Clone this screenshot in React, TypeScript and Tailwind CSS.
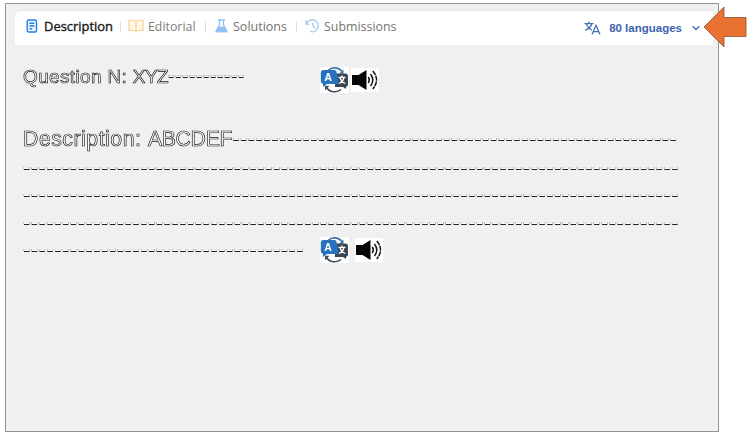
import React from 'react';

const outline =
  "will-change-transform [-webkit-text-stroke:0.65px_#101010] text-white whitespace-nowrap font-['Liberation_Sans',Arial,sans-serif]";

const dashEdge =
  '[-webkit-text-stroke:0.6px_#757575] [paint-order:stroke_fill] [text-shadow:0_0.7px_0_#202020] leading-none align-[1px]';

function Dashes({ count, className }: { count: number; className: string }) {
  return <span className={`${dashEdge} ${className}`}>{'-'.repeat(count)}</span>;
}

function TranslateBadge() {
  return (
    <svg className="block h-[26px] w-[29px] shrink-0 bg-white" viewBox="0 0 29 26">
      <path d="M8 3.5C12-.5 19 0 22.3 5" fill="none" stroke="#3d77ac" strokeWidth="1.6" />
      <path d="M23.5 2.5v4.3h-4.5z" fill="#3d77ac" />
      <path d="M21 22.5C17 26 9.500 25.500 6.500 20.500" fill="none" stroke="#3f4c5b" strokeWidth="1.6" />
      <path d="M5 23.200v-4.500h4.500z" fill="#3f4c5b" />
      <path d="M15 6.500h10.500a2.500 2.500 0 0 1 2.500 2.500v8.500a2.500 2.500 0 0 1-2 2.400V22l-3-2h-8z" fill="#3b4653" />
      <path d="M3 3h11.500a2 2 0 0 1 1.900 1.500L19 17H7l-4 3v-3.200A2.500 2.500 0 0 1 .8 14.500v-9A2.500 2.500 0 0 1 3 3z" fill="#2872bd" />
      <text x="4.300" y="14" className="[-webkit-text-stroke:0px]" fill="#fff" fontSize="10.500" fontWeight="700" fontFamily="Liberation Sans, sans-serif">A</text>
      <path d="M18.500 10.300h7M22 8.500v1.800M24 10.500c-.7 2.800-2.700 5-5 6M20 10.500c.8 2.800 2.800 5 5.200 6" fill="none" stroke="#fff" strokeWidth="1.300" />
    </svg>
  );
}

function Speaker() {
  return (
    <svg className="block h-[24px] w-[28px] shrink-0 bg-white" viewBox="0 0 28 24">
      <path d="M1 7h6.500L15.500 2v20l-8-5H1z" fill="#050505" />
      <g fill="none" stroke="#151515" strokeWidth="1.500">
        <path d="M17.300 9q2 3 0 6" />
        <path d="M19.500 6q4.600 6 0 12" />
        <path d="M21.800 3q7.500 9 0 18" strokeDasharray="5 .7" />
      </g>
    </svg>
  );
}

function Divider() {
  return <span className="h-[11px] w-px shrink-0 bg-[#dedede]" />;
}

export default function App() {
  return (
    <div className="relative h-[438px] w-[752px] overflow-hidden bg-white pl-[5px] pt-[3px]">
      <div className="h-[429px] w-[714px] border border-[#929496] bg-[#f0f0f0] pl-[9px] pt-[6px]">
        <header className="flex h-[35px] w-[698px] items-center rounded-tl-[5px] border-t border-[#e5e5e5] bg-white pb-[4px] font-['Open_Sans',sans-serif] text-[13px] text-[#777773]">
          <div className="flex w-[105px] items-center pl-[11px]">
            <svg className="h-[14px] w-[12px] shrink-0" viewBox="0 0 12 14" fill="none" stroke="#277ee5" strokeWidth="1.400">
              <rect x="1.200" y="1" width="9.300" height="12" rx="1.500" fill="#e9f4ff" />
              <path d="M3.500 4.300h4.800M3.500 7h4.800M3.500 9.700h2.700" />
            </svg>
            <svg className="ml-[5px] h-[20px] w-[71px] overflow-visible" viewBox="0 0 71 20">
              <text x="1" y="15" textLength="69" lengthAdjust="spacingAndGlyphs" fill="#161616" fontSize="13" fontWeight="500" stroke="#161616" strokeWidth=".35">Description</text>
            </svg>
          </div>
          <Divider />
          <div className="flex w-[84px] items-center pl-[7px]">
            <svg className="h-[14px] w-[16px] shrink-0" viewBox="0 0 16 14" fill="#fff8e8" stroke="#f8d69c" strokeWidth="1.300">
              <path d="M8 2.500Q7.500 1.300 5.500 1.300H1v10h4.500Q7.500 11.300 8 12.500q.5-1.200 2.500-1.200H15v-10h-4.500Q8.500 1.300 8 2.500zv10" />
            </svg>
            <svg className="ml-[4px] h-[20px] w-[50px] overflow-visible" viewBox="0 0 50 20">
              <text x="0" y="15" textLength="47.500" lengthAdjust="spacingAndGlyphs" fill="#7d7d79" fontSize="13">Editorial</text>
            </svg>
          </div>
          <Divider />
          <div className="flex w-[90px] items-center pl-[9px]">
            <svg className="h-[14px] w-[13px] shrink-0" viewBox="0 0 13 14" fill="none" stroke="#92c0f4" strokeWidth="1.300">
              <path d="M3 1h7M4.500 1v5L1.200 12.500h10.600L8.500 6V1" />
              <path d="M3.200 8.500h6.600l2 4H1.200z" fill="#92c0f4" />
            </svg>
            <svg className="ml-[5px] h-[20px] w-[56px] overflow-visible" viewBox="0 0 56 20">
              <text x="0" y="15" textLength="54" lengthAdjust="spacingAndGlyphs" fill="#73736f" fontSize="13">Solutions</text>
            </svg>
          </div>
          <Divider />
          <div className="flex items-center pl-[8px]">
            <svg className="h-[14px] w-[15px] shrink-0" viewBox="0 0 15 14" fill="none" stroke="#a3caf1" strokeWidth="1.300">
              <path d="M1 1.500v3.700h3.700M1.600 5A6 6 0 1 1 5.200 12.400M8 3.500V7.300l2.300 2" />
            </svg>
            <svg className="ml-[4px] h-[20px] w-[75px] overflow-visible" viewBox="0 0 75 20">
              <text x="0" y="15" textLength="72.500" lengthAdjust="spacingAndGlyphs" fill="#73736f" fontSize="13">Submissions</text>
            </svg>
          </div>
          <div className="ml-auto flex items-center pr-[13px] pt-[4px] text-[#3c62ae]">
            <svg className="h-[14px] w-[17px]" viewBox="0 0 17 14" fill="none" stroke="#426bb0" strokeWidth="1.250">
              <path d="M.5 2.500h9M5 .5v2M8 2.500C7 6 4.500 8 1 9.500M2.500 3C3.500 6 5.500 8 8 9M8 13.500l4-9.200 4 9.200M9.500 10.700h5" />
            </svg>
            <span className="ml-[8px] whitespace-nowrap font-['Liberation_Sans',Arial,sans-serif] text-[11.500px] font-bold leading-[14px]">80 languages</span>
            <svg className="ml-[10px] h-[6px] w-[8px]" viewBox="0 0 8 6" fill="none" stroke="#426bb0" strokeWidth="1.300">
              <path d="M.7 1.200L4 4.500l3.300-3.300" />
            </svg>
          </div>
        </header>
        <main className="pl-[8px]">
          <div className="flex h-[50px] items-start pt-[21px]">
            <h1 className={`${outline} w-[297px] text-[19px] leading-[20px]`}>
              <span className="tracking-[0.350px]">Question N: </span>
              <span className="tracking-[-0.600px]">XYZ</span>
              <Dashes count={11} className="text-[19.400px] tracking-[0.550px]" />
            </h1>
            <div className="pt-px"><TranslateBadge /></div>
            <div className="ml-[2px] pt-[2px]"><Speaker /></div>
          </div>
          <div className={`${outline} pt-[30px] text-[21.900px] leading-[27.500px]`}>
            <p>
              <span className="text-[21.300px] tracking-[0.500px]">Description: </span>
              <span className="text-[21.300px] tracking-[-0.350px]">ABCDEF</span>
              <Dashes count={57} className="tracking-[0.520px]" />
            </p>
            <p><Dashes count={84} className="tracking-[0.520px]" /></p>
            <p><Dashes count={84} className="tracking-[0.520px]" /></p>
            <p><Dashes count={84} className="tracking-[0.520px]" /></p>
            <div className="flex h-[27px] items-center">
              <p className="w-[297px]"><Dashes count={36} className="tracking-[0.520px]" /></p>
              <TranslateBadge />
              <div className="ml-[6px]"><Speaker /></div>
            </div>
          </div>
        </main>
      </div>
      <svg className="absolute left-[703px] top-[6px] h-[42px] w-[44px]" viewBox="0 0 44 42">
        <path d="M1 21L21 1v10.500h22v19H21V41z" fill="#e97132" stroke="#875238" strokeWidth=".8" />
      </svg>
    </div>
  );
}
